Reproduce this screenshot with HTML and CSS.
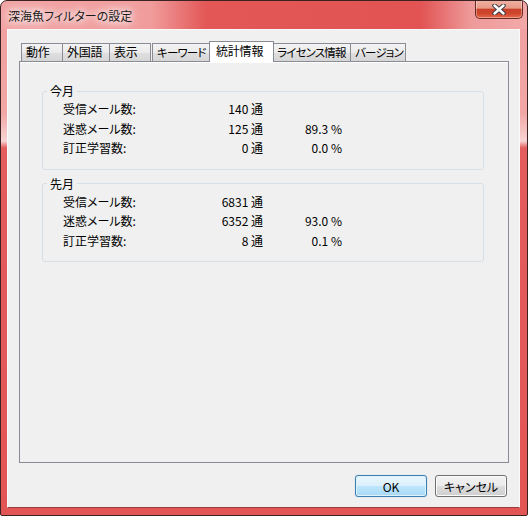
FILE: index.html
```html
<!DOCTYPE html>
<html lang="ja">
<head>
    <meta charset="UTF-8">
    <title>深海魚フィルターの設定</title>
    <link rel="stylesheet" href="styles.css">
</head>
<body>
    <div class="window">
        <div class="titlebar">
            <span class="title">深海魚フィルターの設定</span>
            <div class="close">
                <svg width="14" height="11" viewBox="0 0 14 11">
                    <path d="M2.5 1.5 L11.5 9.5 M11.5 1.5 L2.5 9.5" stroke="#3b3b45" stroke-width="4.4" stroke-linecap="round"/>
                    <path d="M2.5 1.5 L11.5 9.5 M11.5 1.5 L2.5 9.5" stroke="#ffffff" stroke-width="2.4" stroke-linecap="round"/>
                </svg>
            </div>
        </div>

        <div class="client">
            <div class="tabs">
                <div class="tab">動作</div>
                <div class="tab">外国語</div>
                <div class="tab">表示</div>
                <div class="tab kana">キーワード</div>
                <div class="tab selected">統計情報</div>
                <div class="tab kana">ライセンス情報</div>
                <div class="tab kana">バージョン</div>
            </div>

            <div class="panel">
                <fieldset class="group">
                    <legend>今月</legend>
                    <div class="stats">
                        <span>受信メール数:</span><span class="num">140 通</span><span class="num"></span>
                        <span>迷惑メール数:</span><span class="num">125 通</span><span class="num">89.3 %</span>
                        <span>訂正学習数:</span><span class="num">0 通</span><span class="num">0.0 %</span>
                    </div>
                </fieldset>

                <fieldset class="group">
                    <legend>先月</legend>
                    <div class="stats">
                        <span>受信メール数:</span><span class="num">6831 通</span><span class="num"></span>
                        <span>迷惑メール数:</span><span class="num">6352 通</span><span class="num">93.0 %</span>
                        <span>訂正学習数:</span><span class="num">8 通</span><span class="num">0.1 %</span>
                    </div>
                </fieldset>
            </div>

            <div class="buttons">
                <button class="btn default">OK</button>
                <button class="btn">キャンセル</button>
            </div>
        </div>
    </div>
</body>
</html>
```

FILE: styles.css
```css
html, body {
    margin: 0;
    padding: 0;
}

body {
    width: 528px;
    height: 516px;
    font-family: "Noto Sans CJK JP", "Noto Sans", sans-serif;
    font-size: 12px;
    font-feature-settings: "palt";
    color: #000;
    background: #fff;
}

.window {
    box-sizing: border-box;
    width: 528px;
    height: 516px;
    border: 1px solid #3c2323;
    border-radius: 7px 7px 2px 2px;
    display: flex;
    flex-direction: column;
    background:
        linear-gradient(90deg, #f2a5a5 0, #f19c9c 150px, #e35757 205px, #e25454 420px, #ee9a9a 470px, #f3a9a9 100%) top / 100% 28px no-repeat,
        linear-gradient(180deg, #f0a0a0 28px, #f2a6a6 112px, #f8d4d4 140px, #e45c5c 147px, #e25555 100%);
    overflow: hidden;
}

.titlebar {
    height: 28px;
    flex: none;
    display: flex;
    align-items: center;
}

.title {
    margin-left: 7px;
    color: #1a1a1a;
    text-shadow: 0 0 6px #fff, 0 0 10px #fff, 0 0 14px rgba(255, 255, 255, 0.8);
}

.close {
    align-self: flex-start;
    margin-left: auto;
    margin-right: 4px;
    margin-top: -1px;
    width: 48px;
    height: 19px;
    box-sizing: border-box;
    border: 1px solid #6a2a24;
    border-top: none;
    border-radius: 0 0 5px 5px;
    background: linear-gradient(180deg, #efb3a4 0, #e79b88 45%, #c9412a 52%, #cf462d 75%, #e66a4c 100%);
    box-shadow: inset 0 0 0 1px rgba(255, 255, 255, 0.35);
    display: flex;
    justify-content: center;
    align-items: center;
}

.client {
    flex: 1;
    margin: 0 7px 7px 6px;
    border: 1px solid rgba(255, 255, 255, 0.6);
    border-bottom-color: #9c3a3a;
    background: #f0f0f0;
    display: flex;
    flex-direction: column;
}

.tabs {
    display: flex;
    align-items: flex-end;
    height: 20px;
    margin: 11px 0 0 11px;
    padding-left: 2px;
    position: relative;
    z-index: 1;
}

.tab {
    box-sizing: border-box;
    height: 18px;
    line-height: 16px;
    padding-left: 4px;
    border: 1px solid #898c95;
    border-bottom: none;
    margin-right: -1px;
    background: linear-gradient(180deg, #f3f3f3 0, #ebebeb 50%, #dfdfdf 51%, #d6d6d6 100%);
    white-space: nowrap;
    letter-spacing: -0.2px;
    overflow: hidden;
}

.tab.kana {
    font-size: 11.5px;
    letter-spacing: -0.8px;
}

/* tab widths follow the original dialog */
.tab:nth-child(1) { width: 42px; }
.tab:nth-child(2) { width: 48px; }
.tab:nth-child(3) { width: 42px; margin-right: 1px; }
.tab:nth-child(4) { width: 60px; }
.tab:nth-child(5) { width: 62px; }
.tab:nth-child(6) { width: 79px; }
.tab:nth-child(7) { width: 56px; }

.tab.selected {
    width: 65px;
    height: 21px;
    margin: 0 -2px -1px -2px;
    padding: 1px 0 0 6px;
    background: #fff;
    position: relative;
}

.panel {
    box-sizing: border-box;
    height: 402px;
    margin: 0 10px 0 11px;
    border: 1px solid #898c95;
    background: #f0f0f0;
    box-shadow: inset 0 1px 0 #fff;
    padding-top: 22px;
}

.group {
    margin: 0 24px 7px 22px;
    padding: 0 0 11px 4px;
    border: 1px solid #d5dfe5;
    border-radius: 3px;
}

.group legend {
    padding: 0 3px;
    line-height: 14px;
}

.stats {
    display: grid;
    grid-template-columns: 120px 80px 79px;
    grid-auto-rows: 19.5px;
    line-height: 19.5px;
    margin-left: 16px;
    margin-top: 1px;
}

.num {
    text-align: right;
}

.buttons {
    display: flex;
    justify-content: flex-end;
    gap: 8px;
    margin: 12px 12px 0 0;
}

.btn {
    width: 72px;
    height: 22px;
    padding: 0;
    font-family: inherit;
    font-size: 12px;
    font-feature-settings: "palt";
    color: #000;
    border: 1px solid #707070;
    border-radius: 3px;
    background: linear-gradient(180deg, #f2f2f2 0, #ebebeb 50%, #dddddd 51%, #cfcfcf 100%);
    box-shadow: inset 0 0 0 1px #fbfbfb;
}

.btn.default {
    border-color: #3c7fb1;
    background: linear-gradient(180deg, #eaf6fd 0, #d9f0fc 50%, #bee6fd 51%, #a7d9f5 100%);
    box-shadow: inset 0 0 0 1px #dff2fc, 0 0 1px #7ab5e0;
}
```
